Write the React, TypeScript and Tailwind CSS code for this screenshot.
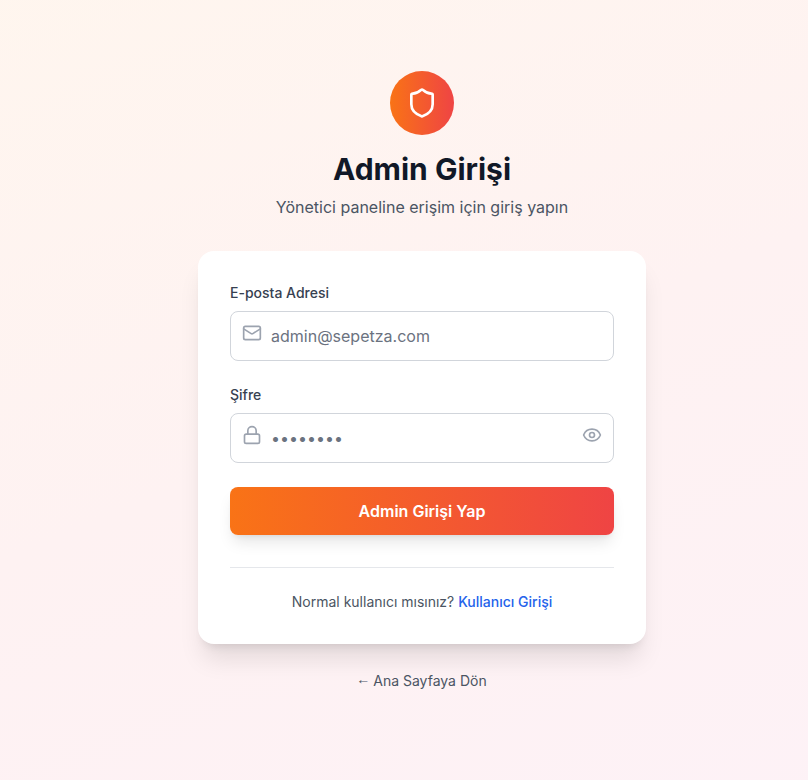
import React from "react";
import { Shield, Mail, Lock, Eye } from "lucide-react";

export default function App() {
  return (
    <div className="flex h-screen items-start justify-center overflow-hidden bg-[linear-gradient(to_bottom_right,#fff7ed,#fef2f2,#fdf2f8)] bg-[length:1900px_780px] bg-[position:-528px_0] pl-9 pt-[71px] font-['Inter',sans-serif]">
      <div className="w-[448px]">
        <div className="mb-8 text-center">
          <div className="mx-auto mb-4 flex size-16 items-center justify-center rounded-full bg-[linear-gradient(to_right,#f97316,#ef4444)]">
            <Shield className="size-8 text-white" />
          </div>
          <h1 className="mb-2 text-3xl font-bold text-[#111827]">Admin Girişi</h1>
          <p className="text-[#4b5563]">Yönetici paneline erişim için giriş yapın</p>
        </div>
        <div className="rounded-2xl bg-white p-8 shadow-xl">
          <form className="space-y-6">
            <div>
              <label className="mb-2 block text-sm font-medium text-[#374151]">E-posta Adresi</label>
              <div className="relative">
                <Mail className="absolute left-3 top-3 size-5 text-[#9ca3af]" />
                <input type="email" placeholder="admin@sepetza.com" className="block h-[50px] w-full rounded-lg border border-[#d1d5db] pl-10 pr-4 placeholder:text-[#6b7280]" />
              </div>
            </div>
            <div>
              <label className="mb-2 block text-sm font-medium text-[#374151]">Şifre</label>
              <div className="relative">
                <Lock className="absolute left-3 top-3 size-5 text-[#9ca3af]" />
                <input type="password" placeholder="••••••••" className="block h-[50px] w-full rounded-lg border border-[#d1d5db] pl-10 pr-12 placeholder:text-[#6b7280]" />
                <button type="button" className="absolute right-3 top-3 text-[#9ca3af]">
                  <Eye className="size-5" />
                </button>
              </div>
            </div>
            <button type="button" className="block h-12 w-full rounded-lg bg-[linear-gradient(to_right,#f97316,#ef4444)] font-semibold text-white shadow-lg">
              Admin Girişi Yap
            </button>
          </form>
          <div className="mt-8 border-t border-[#e5e7eb] pt-6 text-center text-sm text-[#4b5563]">
            Normal kullanıcı mısınız? <a className="font-medium text-[#2563eb]">Kullanıcı Girişi</a>
          </div>
        </div>
        <div className="mt-[27px] text-center text-sm text-[#4b5563]">
          <span className="-mx-px align-[2px] font-['Liberation_Sans',sans-serif] text-sm leading-none">←</span> Ana Sayfaya Dön
        </div>
      </div>
    </div>
  );
}
